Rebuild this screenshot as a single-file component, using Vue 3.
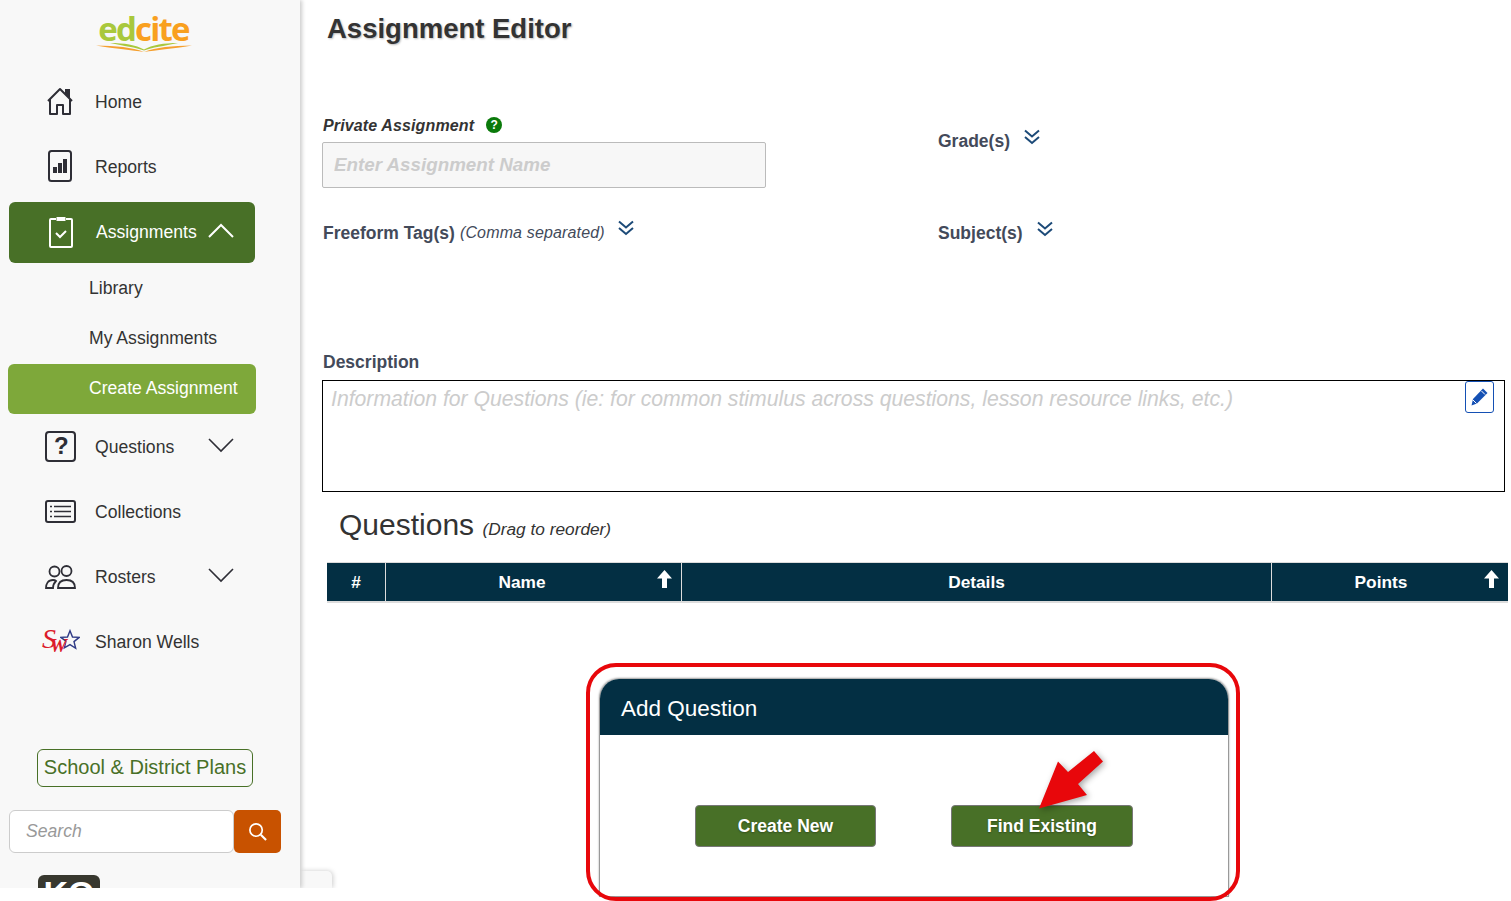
<script setup>
const columns = [
  { label: '#', width: 58, pad: 0, sort: false },
  { label: 'Name', width: 295, pad: 23, sort: true },
  { label: 'Details', width: 589, pad: 0, sort: false },
  { label: 'Points', width: 236, pad: 18, sort: true }
]
</script>

<template>
  <div class="page">
    <aside class="sidebar">
      <div class="logo">
        <div class="logo-word"><span class="lg">ed</span><span class="lo">cite</span></div>
        <svg class="swoosh" width="96" height="9" viewBox="0 0 96 9">
          <path d="M0 2.500 C 20 3 36 4 48 9 C 60 4 76 3 96 2.500 C 76 6 60 7 48 9 C 36 7 20 6 0 2.500Z" fill="#f5a030" />
          <path d="M14 0 C 28 0 40 2 48 6.500 C 56 2 68 0 82 0 C 68 3 56 4.500 48 7.500 C 40 4.500 28 3 14 0Z" fill="#a9c83c" />
        </svg>
      </div>

      <a class="nav-item">
        <span class="nav-icon">
          <svg width="28" height="28" viewBox="0 0 28 28" fill="none" stroke="#2e2e36" stroke-width="2">
            <path d="M2 14 L14 2 L26 14 M4 12 V27 H11 V18 H17 V27 H24 V12" stroke-linejoin="round" />
            <path d="M20 8 V3 H23 V11" fill="#2e2e36" />
          </svg>
        </span>
        <span>Home</span>
      </a>
      <a class="nav-item">
        <span class="nav-icon">
          <svg width="24" height="32" viewBox="0 0 24 32" fill="none">
            <rect x="1" y="1" width="22" height="30" rx="2.500" stroke="#2e2e36" stroke-width="2" />
            <path d="M5 17h4v6H5zM10 13h4v10h-4zM15 9h4v14h-4z" fill="#2e2e36" />
          </svg>
        </span>
        <span>Reports</span>
      </a>
      <a class="nav-item active">
        <span class="nav-icon">
          <svg width="24" height="32" viewBox="0 0 24 32" fill="none" stroke="#fff" stroke-width="2">
            <path d="M7 3H2a1 1 0 0 0-1 1v26a1 1 0 0 0 1 1h20a1 1 0 0 0 1-1V4a1 1 0 0 0-1-1h-5" />
            <rect x="7.500" y="1" width="9" height="4" fill="#fff" stroke="none" />
            <path d="M7 17l4 4 6-6" />
          </svg>
        </span>
        <span class="active-label">Assignments</span>
        <svg class="chev up" width="26" height="15" viewBox="0 0 26 15" fill="none" stroke="#fff" stroke-width="2"><path d="M1 14L13 2l12 12" /></svg>
      </a>
      <a class="sub-item">Library</a>
      <a class="sub-item">My Assignments</a>
      <a class="sub-item current">Create Assignment</a>
      <a class="nav-item">
        <span class="nav-icon wide">
          <svg width="32" height="32" viewBox="0 0 32 32" fill="none">
            <rect x="1" y="1" width="29" height="29" rx="3" stroke="#2e2e36" stroke-width="2" />
          </svg>
          <span class="q-mark">?</span>
        </span>
        <span>Questions</span>
        <svg class="chev" width="26" height="15" viewBox="0 0 26 15" fill="none" stroke="#2e2e36" stroke-width="1.600"><path d="M1 1l12 12L25 1" /></svg>
      </a>
      <a class="nav-item">
        <span class="nav-icon wide">
          <svg width="32" height="24" viewBox="0 0 32 24" fill="none" stroke="#2e2e36">
            <rect x="1" y="1" width="29" height="21" rx="2" stroke-width="2" />
            <path d="M9 6.500h17M9 11.500h17M9 16.500h17M5 6.500h2M5 11.500h2M5 16.500h2" stroke-width="1.300" />
          </svg>
        </span>
        <span>Collections</span>
      </a>
      <a class="nav-item">
        <span class="nav-icon wide">
          <svg width="32" height="24" viewBox="0 0 32 24" fill="none" stroke="#2e2e36" stroke-width="1.800">
            <circle cx="9.500" cy="6.500" r="5" />
            <circle cx="21.500" cy="6" r="5" />
            <path d="M1 23c0-4 2-8 7-8 1 0 2 0 3 1-2 2-3 4-3 7z" />
            <path d="M13 23c0-5 3-8 8.500-8S30 18 30 23z" />
          </svg>
        </span>
        <span>Rosters</span>
        <svg class="chev" width="26" height="15" viewBox="0 0 26 15" fill="none" stroke="#2e2e36" stroke-width="1.600"><path d="M1 1l12 12L25 1" /></svg>
      </a>
      <a class="nav-item">
        <span class="nav-icon sw">
          <svg class="sw-star" width="20" height="21" viewBox="0 0 24 24" fill="none" stroke="#2f3a86" stroke-width="1.700">
            <path d="M12 1.500l3 7.500 8 .5-6.200 5 2 8-6.800-4.300L5.200 22l2-8L1 9.500l8-.5z" />
          </svg>
          <span class="sw-s">S</span><span class="sw-w">W</span>
        </span>
        <span>Sharon Wells</span>
      </a>

      <button class="plans">School &amp; District Plans</button>

      <div class="search">
        <input class="search-input" placeholder="Search" />
        <button class="search-btn">
          <svg width="19" height="19" viewBox="0 0 20 20" fill="none" stroke="#fff" stroke-width="1.800">
            <circle cx="8.500" cy="8.500" r="6.500" />
            <path d="M13.500 13.500L19 19" stroke-width="2.200" />
          </svg>
        </button>
      </div>
      <div class="ko">KO</div>
    </aside>
    <div class="corner-tab"></div>

    <main class="main">
      <h1 class="title">Assignment Editor</h1>

      <section class="form-grid">
        <div class="col-left">
          <div class="private">
            <span class="private-label">Private Assignment</span>
            <span class="help">?</span>
          </div>
          <input class="name-input" placeholder="Enter Assignment Name" />
          <div class="tags">
            <span class="field-label">Freeform Tag(s)</span>
            <span class="hint">(Comma separated)</span>
            <svg class="dbl" width="16" height="16" viewBox="0 0 16 16" fill="none" stroke="#1c4a78" stroke-width="2"><path d="M1 1.500l7 6 7-6M1 8l7 6 7-6" /></svg>
          </div>
        </div>
        <div class="col-right">
          <div class="grades">
            <span class="field-label">Grade(s)</span>
            <svg class="dbl" width="16" height="16" viewBox="0 0 16 16" fill="none" stroke="#1c4a78" stroke-width="2"><path d="M1 1.500l7 6 7-6M1 8l7 6 7-6" /></svg>
          </div>
          <div class="subjects">
            <span class="field-label">Subject(s)</span>
            <svg class="dbl" width="16" height="16" viewBox="0 0 16 16" fill="none" stroke="#1c4a78" stroke-width="2"><path d="M1 1.500l7 6 7-6M1 8l7 6 7-6" /></svg>
          </div>
        </div>
      </section>

      <div class="field-label desc-label">Description</div>
      <div class="desc-box">
        <span class="desc-text">Information for Questions (ie: for common stimulus across questions, lesson resource links, etc.)</span>
        <button class="edit-btn">
          <svg width="17" height="18" viewBox="0 0 17 18" fill="#1450b4">
            <path d="M12 .5L16.500 5 6 15.500 .5 17.500l1.500-6.500z" />
            <path d="M10.500 3l3.500 3.500" stroke="#fff" stroke-width="1" fill="none" />
            <path d="M2 12l3.500 3.500" stroke="#fff" stroke-width="1" fill="none" />
          </svg>
        </button>
      </div>

      <h2 class="q-heading">Questions <span class="q-sub">(Drag to reorder)</span></h2>

      <div class="q-table">
        <div v-for="c in columns" :key="c.label" class="q-col" :style="{ width: c.width + 'px', paddingRight: c.pad + 'px' }">
          <span>{{ c.label }}</span>
          <svg v-if="c.sort" class="sort" width="15" height="18" viewBox="0 0 15 18" fill="#fff"><path d="M7.500 0L15 8.500h-5V18H5V8.500H0z" /></svg>
        </div>
      </div>

      <section class="add-card">
        <header class="add-head">Add Question</header>
        <div class="add-body">
          <button class="add-btn first">Create New</button>
          <button class="add-btn">Find Existing</button>
        </div>
      </section>

      <div class="red-frame"></div>
      <svg class="red-arrow" width="70" height="62" viewBox="0 0 70 62">
        <path d="M2 58.500L21 11.500 31 22 57 1 66 11.500 41 34 50 45z" fill="#e8070b" />
      </svg>
    </main>
  </div>
</template>

<style>
html, body { margin: 0; background: #fff; }
</style>

<style scoped>
.page {
  position: relative;
  display: flex;
  align-items: flex-start;
  width: 1511px;
  height: 901px;
  overflow: hidden;
  font-family: "Liberation Sans", Arial, sans-serif;
  color: #333;
}

.sidebar {
  position: relative;
  z-index: 2;
  flex: none;
  width: 300px;
  height: 888px;
  overflow: hidden;
  box-sizing: border-box;
  background: #f8f8f8;
  box-shadow: 2px 0 4px #ccc;
  clip-path: inset(0 -8px 0 0);
  display: flex;
  flex-direction: column;
  font-size: 17.6px;
}
.logo {
  height: 69px;
  flex: none;
  display: flex;
  flex-direction: column;
  align-items: center;
  padding: 12px 13px 0 0;
  box-sizing: border-box;
}
.logo-word {
  font-family: "Open Sans", sans-serif;
  font-weight: 700;
  font-size: 33px;
  line-height: 34px;
  letter-spacing: -1.800px;
}
.lg { color: #a9c83c; }
.lo { color: #f9a01f; }
.swoosh { margin-top: -3px; }

.nav-item {
  flex: none;
  height: 65px;
  display: flex;
  align-items: center;
  color: #333;
  padding: 1px 0 0 40px;
  box-sizing: border-box;
}
.nav-icon {
  position: relative;
  top: -1px;
  width: 40px;
  margin-right: 15px;
  display: flex;
  justify-content: center;
  align-items: center;
  height: 36px;
}
.nav-icon.wide { left: 1px; top: 0; }
.q-mark {
  position: absolute;
  left: 13px;
  top: 3px;
  font-size: 24px;
  font-weight: 700;
  line-height: 28px;
  color: #2e2e36;
}
.sw { height: 32px; }
.sw-star { position: absolute; left: 20px; top: 4px; }
.sw-s, .sw-w {
  position: absolute;
  font-family: "Liberation Serif", serif;
  font-style: italic;
  color: #dc1c2c;
}
.sw-s { left: 2px; top: 0; font-size: 28px; line-height: 28px; }
.sw-w { left: 10px; top: 11px; font-size: 19px; line-height: 20px; font-weight: 700; }

.chev { margin-left: auto; margin-right: 66px; position: relative; top: -2px; }

.active {
  height: 61px;
  margin: 3px 45px 0 9px;
  padding: 0 0 0 31px;
  background: #487027;
  border-radius: 6px;
  color: #fff;
}
.active .nav-icon { margin-right: 16px; left: 1px; top: -1px; }
.active .chev { margin: 0 21px 0 auto; position: relative; top: -2px; }
.active-label { white-space: nowrap; }

.sub-item {
  flex: none;
  height: 50px;
  display: flex;
  align-items: center;
  padding-left: 89px;
  box-sizing: border-box;
  color: #333;
}
.current {
  margin: 1px 44px 0 8px;
  padding: 0 0 2px 81px;
  background: #7ea83a;
  border-radius: 6px;
  color: #fff;
  white-space: nowrap;
}

.plans {
  flex: none;
  align-self: flex-start;
  margin: 75px 0 0 37px;
  width: 216px;
  height: 38px;
  padding: 0 0 2px;
  background: transparent;
  border: 1px solid #487027;
  border-radius: 6px;
  color: #487027;
  font: 20px "Liberation Sans", Arial, sans-serif;
  white-space: nowrap;
}

.search {
  flex: none;
  display: flex;
  margin: 23px 0 0 9px;
  height: 43px;
}
.search-input {
  width: 225px;
  box-sizing: border-box;
  border: 1px solid #ccc;
  border-radius: 6px;
  background: #fff;
  padding: 0 16px;
  font: italic 17.6px "Liberation Sans", Arial, sans-serif;
  outline: none;
}
.search-input::placeholder { color: #999; opacity: 1; }
.search-btn {
  width: 47px;
  border: 0;
  padding: 0 1px 1px 0;
  background: #c85200;
  border-radius: 5px;
  display: flex;
  align-items: center;
  justify-content: center;
}

.ko {
  flex: none;
  margin: 22px 0 0 38px;
  width: 62px;
  height: 40px;
  background: #38382f;
  border-radius: 6px 6px 0 0;
  color: #fff;
  font-size: 34px;
  font-weight: 700;
  line-height: 36px;
  text-align: center;
}

.corner-tab {
  position: absolute;
  z-index: 1;
  left: 300px;
  top: 871px;
  width: 32px;
  height: 17px;
  background: #f8f8f8;
  border-radius: 0 5px 0 0;
  box-shadow: 1px 0 5px #ccc;
  clip-path: inset(-6px -6px 0 0);
}

.main {
  position: relative;
  flex: 1;
  height: 901px;
  padding-left: 1px;
  box-sizing: border-box;
}
.title {
  margin: 0;
  padding: 12px 0 0 26px;
  height: 116px;
  box-sizing: border-box;
  font-size: 27.5px;
  line-height: 34px;
  font-weight: 700;
  color: #333;
  text-shadow: 1px 1px 2px #bbb;
}

.form-grid {
  display: grid;
  grid-template-columns: 615px 1fr;
  height: 159px;
  padding-left: 22px;
}
.private {
  display: flex;
  align-items: center;
  height: 20px;
}
.private-label {
  font-size: 16px;
  font-style: italic;
  font-weight: 700;
  letter-spacing: 0.130px;
  color: #333;
}
.help {
  position: relative;
  top: -1px;
  width: 16px;
  height: 16px;
  margin-left: 12px;
  border-radius: 50%;
  background: #0a7a0a;
  color: #fff;
  font-size: 12px;
  font-weight: 700;
  line-height: 16px;
  text-align: center;
}
.name-input {
  display: block;
  width: 444px;
  height: 46px;
  margin: 6px 0 0 -1px;
  box-sizing: border-box;
  background: #f7f7f7;
  border: 1px solid #bbb;
  border-radius: 2px;
  padding: 0 11px;
  font: italic 700 18.8px "Liberation Sans", Arial, sans-serif;
  outline: none;
}
.name-input::placeholder { color: #ccc; opacity: 1; }

.field-label {
  font-size: 17.500px;
  font-weight: 700;
  color: #434a5a;
}
.hint {
  margin-left: 5px;
  font-size: 16px;
  font-style: italic;
  color: #434a5a;
  letter-spacing: 0.150px;
}
.tags {
  display: flex;
  align-items: center;
  height: 24px;
  margin-top: 33px;
}
.dbl { margin-left: 14px; position: relative; top: -4px; }
.tags .dbl { margin-left: 13px; top: -5px; }
.grades, .subjects {
  display: flex;
  align-items: center;
  height: 24px;
}
.grades { margin-top: 13px; }
.subjects { margin-top: 68px; }

.desc-label {
  height: 24px;
  line-height: 24px;
  margin: 75px 0 0 22px;
}
.desc-box {
  position: relative;
  width: 1183px;
  height: 112px;
  box-sizing: border-box;
  margin: 6px 0 0 21px;
  border: 1px solid #000;
  padding: 5px 8px;
}
.desc-text {
  font-size: 21.200px;
  font-style: italic;
  color: #ccc;
  line-height: 26px;
  white-space: nowrap;
}
.edit-btn {
  position: absolute;
  right: 10px;
  top: 0;
  width: 29px;
  height: 32px;
  padding: 0;
  background: #fff;
  border: 1px solid #1450b4;
  border-radius: 3px;
  display: flex;
  align-items: center;
  justify-content: center;
}

.q-heading {
  margin: 13px 0 0 38px;
  height: 40px;
  font-size: 30px;
  line-height: 40px;
  font-weight: 400;
  color: #333;
}
.q-sub {
  font-size: 17.300px;
  font-style: italic;
}

.q-table {
  display: flex;
  gap: 1px;
  width: 1181px;
  margin: 17px 0 0 26px;
  height: 38px;
  background: #dcdcdc;
  border-top: 1px solid #dcdcdc;
  border-bottom: 2px solid #dcdcdc;
  box-sizing: content-box;
}
.q-col {
  position: relative;
  flex: none;
  box-sizing: border-box;
  background: #032f43;
  color: #fff;
  font-size: 17.300px;
  font-weight: 700;
  display: flex;
  align-items: center;
  justify-content: center;
}
.sort { position: absolute; right: 9px; top: 7px; }

.add-card {
  width: 630px;
  height: 218px;
  margin: 76px 0 0 298px;
  box-sizing: border-box;
  border: 1px solid #999;
  border-top: 0;
  border-radius: 20px 20px 0 0;
  overflow: hidden;
  box-shadow: 0 -1px 2px #999;
}
.add-head {
  height: 56px;
  box-sizing: border-box;
  padding: 14px 0 0 21px;
  background: #032f43;
  color: #fff;
  font-size: 22.500px;
  line-height: 32px;
}
.add-body {
  display: flex;
  padding: 70px 0 0 95px;
  background: #fff;
}
.add-btn {
  width: 181px;
  height: 42px;
  padding: 0;
  background: #487027;
  border: 1px solid #777;
  border-radius: 4px;
  color: #fff;
  font: 700 17.500px "Liberation Sans", Arial, sans-serif;
  text-shadow: 0 1px 2px rgba(0, 0, 0, .3);
}
.add-btn.first { margin-right: 75px; }
.add-btn:not(.first) { width: 182px; }

.red-frame {
  position: absolute;
  left: 286px;
  top: 663px;
  width: 654px;
  height: 238px;
  box-sizing: border-box;
  border: 4px solid #e8070b;
  border-radius: 30px;
}
.red-arrow {
  position: absolute;
  left: 737px;
  top: 750px;
  filter: drop-shadow(2px 2px 3px rgba(0, 0, 0, .35));
}
</style>
